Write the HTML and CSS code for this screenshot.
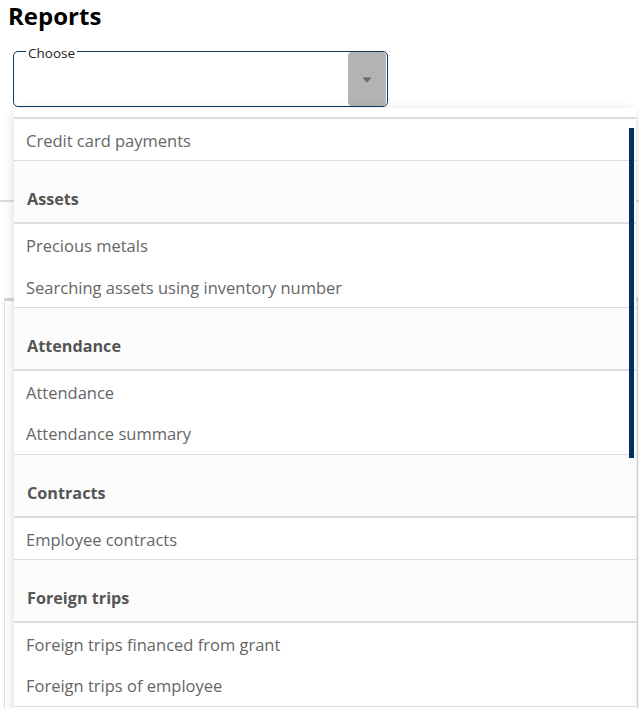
FILE: index.html
```html
<!DOCTYPE html>
<html lang="en">
<head>
<meta charset="utf-8">
<title>Reports</title>
<link rel="stylesheet" href="styles.css">
</head>
<body>
<div class="page">
  <h1 class="title">Reports</h1>
  <div class="picker">
    <div class="select">
      <span class="select-label">Choose</span>
      <div class="select-value"></div>
      <div class="select-btn">
        <svg class="caret" width="10" height="6" viewBox="0 0 10 6"><path d="M0.5 0.5 H9.5 L5 5.5 Z" fill="#666"/></svg>
      </div>
    </div>
    <div class="menu">
      <div class="group">
        <div class="group-head group-head-empty"></div>
        <div class="item">Credit card payments</div>
      </div>
      <div class="group">
        <div class="group-head">Assets</div>
        <div class="item">Precious metals</div>
        <div class="item">Searching assets using inventory number</div>
      </div>
      <div class="group">
        <div class="group-head">Attendance</div>
        <div class="item">Attendance</div>
        <div class="item">Attendance summary</div>
      </div>
      <div class="group">
        <div class="group-head">Contracts</div>
        <div class="item">Employee contracts</div>
      </div>
      <div class="group">
        <div class="group-head">Foreign trips</div>
        <div class="item">Foreign trips financed from grant</div>
        <div class="item">Foreign trips of employee</div>
      </div>
      <div class="thumb"></div>
    </div>
  </div>
</div>
<div class="behind">
  <div class="tabs"></div>
  <div class="card"></div>
</div>
</body>
</html>
```
FILE: styles.css
```css
html {
  overflow: hidden;
}

body {
  margin: 0;
  padding: 0;
  height: 708px;
  overflow: hidden;
  position: relative;
  background: #fff;
  font-family: "Open Sans", "Noto Sans", sans-serif;
}

.page {
  padding: 0 8px;
}

.title {
  margin: 0;
  font-size: 24px;
  line-height: 32px;
  font-weight: 700;
  color: #000;
}

.picker {
  position: relative;
  margin: 19px 0 0 5px;
  width: 375px;
  z-index: 2;
}

.select {
  position: relative;
  display: flex;
  height: 56px;
  box-sizing: border-box;
  border: 1px solid #0b3763;
  border-radius: 5px;
  background: #fff;
}

.select-label {
  position: absolute;
  left: 12px;
  top: -6px;
  padding: 0 2px;
  font-size: 13.5px;
  line-height: 14px;
  color: #222;
  background: #fff;
}

.select-value {
  flex: 1;
}

.select-btn {
  width: 38px;
  margin: 0 1px 0 0;
  background: #b3b3b3;
  border-radius: 4px;
  display: flex;
  align-items: center;
  justify-content: center;
}

.caret {
  display: block;
  margin-top: 1px;
}

.menu {
  position: absolute;
  left: 1px;
  top: 57px;
  width: 622px;
  background: #fff;
  border-radius: 6px 8px 0 0;
  box-shadow: 0 3px 12px rgba(0, 0, 0, 0.16);
  padding-bottom: 40px;
}

.group {
  border-bottom: 1px solid #dcdcdc;
}

.group-head {
  height: 33px;
  padding: 28px 12px 0 13px;
  line-height: 21px;
  font-size: 16.2px;
  font-weight: 700;
  color: #555;
  background: #fcfcfc;
  border-bottom: 2px solid #dcdcdc;
}

.group-head-empty {
  padding: 0;
  height: 9px;
  line-height: 9px;
  background: #fff;
}

.item {
  padding: 11px 12px 9px;
  line-height: 21.33px;
  font-size: 16.5px;
  color: #666;
}

.thumb {
  position: absolute;
  right: 2px;
  top: 20px;
  width: 5px;
  height: 330px;
  background: #03305e;
}

.behind {
  position: absolute;
  left: 0;
  right: 0;
  top: 107px;
  z-index: 1;
}

.tabs {
  height: 93px;
  border-bottom: 2px solid #dedede;
}

.card {
  margin: 96px 1px 0 4px;
  height: 500px;
  border: 1px solid #dedede;
  border-top: 3px solid #d6d6d6;
}
```
